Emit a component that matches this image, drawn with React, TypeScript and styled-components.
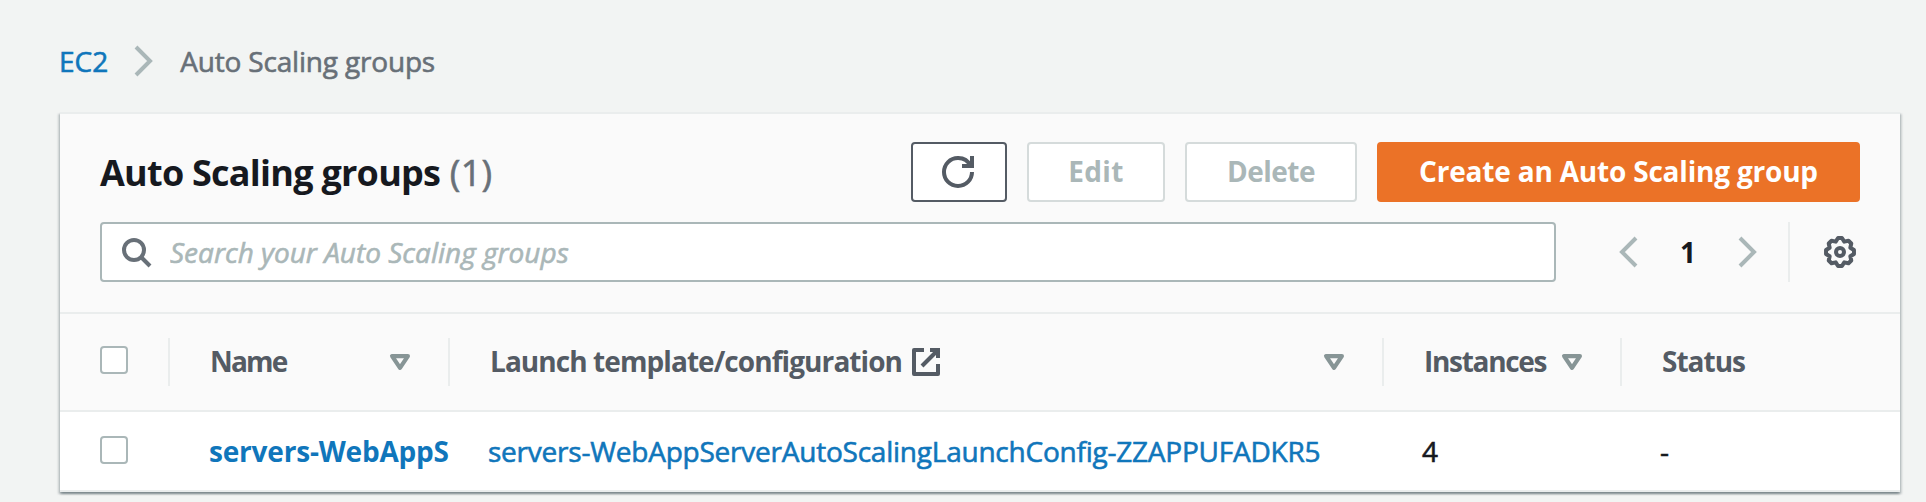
import React from 'react';
import styled, { createGlobalStyle } from 'styled-components';

const GlobalStyle = createGlobalStyle`
  *, *::before, *::after { box-sizing: border-box; }
  body {
    margin: 0;
    background: #f2f4f3;
    color: #16191f;
    font: 400 28px/38px "Open Sans", "Noto Sans", sans-serif;
  }
`;

const Page = styled.main`
  height: 502px;
  padding: 42px 26px 0 60px;
  overflow: hidden;
`;

const Breadcrumbs = styled.nav`
  display: flex;
  align-items: center;
  gap: 20px;
  height: 38px;
  margin: 0 0 32px -1px;
  -webkit-text-stroke: 0.6px currentColor;
`;

const Crumb = styled.span<{ $link?: boolean }>`
  color: ${(p) => (p.$link ? '#1076bb' : '#687078')};
  letter-spacing: ${(p) => (p.$link ? '0' : '-0.18px')};
`;

const Icon = styled.svg<{ $color: string; $round?: boolean; $weight?: number }>`
  display: block;
  flex: none;
  width: 32px;
  height: 32px;
  overflow: visible;
  fill: none;
  stroke: ${(p) => p.$color};
  stroke-width: ${(p) => p.$weight ?? 2};
  stroke-linejoin: ${(p) => (p.$round ? 'round' : 'miter')};
`;

const Panel = styled.section`
  width: 1840px;
  border-top: 2px solid #eaeded;
  background: #fff;
  box-shadow:
    0 2px 2px 0 rgba(0, 28, 36, 0.3),
    2px 2px 2px 0 rgba(0, 28, 36, 0.15),
    -2px 2px 2px 0 rgba(0, 28, 36, 0.15);
`;

const PanelHeader = styled.header`
  height: 200px;
  padding: 28px 40px 0;
  background: #fafafa;
  border-bottom: 2px solid #eaeded;
`;

const TitleRow = styled.div`
  display: flex;
  align-items: center;
  justify-content: space-between;
  height: 60px;
  margin-bottom: 20px;
`;

const Title = styled.h2`
  margin: 0;
  padding-top: 2px;
  font-size: 36px;
  font-weight: 700;
  letter-spacing: -0.75px;
`;

const Counter = styled.span`
  margin-left: 1px;
  color: #687078;
  font-weight: 400;
  letter-spacing: 0.2px;
  -webkit-text-stroke: 0.6px currentColor;
`;

const Actions = styled.div`
  display: flex;
  gap: 20px;
`;

const tones = {
  normal: { border: '#545b64', bg: '#fff', text: '#545b64' },
  disabled: { border: '#d5dbdb', bg: '#fff', text: '#aab7b8' },
  primary: { border: '#eb7227', bg: '#eb7227', text: '#fff' },
};

const Button = styled.button<{ $tone: keyof typeof tones; $width: number; $track?: number }>`
  display: flex;
  align-items: center;
  justify-content: center;
  width: ${(p) => p.$width}px;
  height: 60px;
  padding: 0 0 2px;
  border: 2px solid ${(p) => tones[p.$tone].border};
  border-radius: 4px;
  background: ${(p) => tones[p.$tone].bg};
  color: ${(p) => tones[p.$tone].text};
  font: inherit;
  font-weight: 700;
  letter-spacing: ${(p) => p.$track ?? 0}px;
  white-space: nowrap;
`;

const IconButton = styled(Button)`
  padding: 0 2px 0 0;
`;

const ToolRow = styled.div`
  display: flex;
  align-items: center;
  height: 60px;
`;

const SearchBox = styled.label`
  display: flex;
  align-items: center;
  gap: 18px;
  width: 1456px;
  height: 60px;
  padding: 0 18px;
  border: 2px solid #aab7b8;
  border-radius: 4px;
  background: #fff;
`;

const SearchInput = styled.input`
  flex: 1;
  min-width: 0;
  padding: 0;
  border: 0;
  outline: 0;
  background: transparent;
  font: inherit;
  &::placeholder {
    color: #aab7b8;
    font-style: italic;
    opacity: 1;
    -webkit-text-stroke: 0.6px #aab7b8;
  }
`;

const Pager = styled.div`
  display: flex;
  align-items: center;
  margin-left: 58px;
`;

const PageNumber = styled.span`
  width: 86px;
  padding: 0 2px 1px 0;
  text-align: center;
  font-weight: 700;
`;

const Settings = styled.div`
  display: flex;
  align-items: center;
  height: 60px;
  margin-left: 24px;
  padding-left: 34px;
  border-left: 2px solid #eaeded;
`;

const Row = styled.div`
  display: grid;
  grid-template-columns: 110px 280px 934px 238px 1fr;
  align-items: center;
  border-bottom: 2px solid #eaeded;
`;

const HeadRow = styled(Row)`
  height: 98px;
  background: #fafafa;
  color: #545b64;
  font-weight: 700;
`;

const BodyRow = styled(Row)`
  height: 80px;
`;

const HeadCell = styled.div`
  display: flex;
  align-items: center;
  height: 48px;
  padding: 0 38px 0 40px;
  border-right: 2px solid #eaeded;
  white-space: nowrap;
  &:last-child { border-right: 0; }
`;

const HeadLabel = styled.span<{ $track: number }>`
  padding-bottom: 2px;
  letter-spacing: ${(p) => p.$track}px;
`;

const ExternalSlot = styled.span`
  margin-left: 8px;
`;

const SortSlot = styled.span`
  margin: 0 -6px 0 auto;
`;

const CheckCell = styled(HeadCell)<{ $plain?: boolean }>`
  padding: 0 0 ${(p) => (p.$plain ? 2 : 4)}px 40px;
  border-right-color: ${(p) => (p.$plain ? 'transparent' : '#eaeded')};
`;

const Checkbox = styled.span`
  width: 28px;
  height: 28px;
  border: 2px solid #aab7b8;
  border-radius: 4px;
  background: #fff;
`;

const Cell = styled.div<{ $track?: number; $inset?: number }>`
  padding-left: ${(p) => p.$inset ?? 38}px;
  letter-spacing: ${(p) => p.$track ?? 0}px;
`;

const CellText = styled.div<{ $link?: boolean; $bold?: boolean }>`
  white-space: nowrap;
  color: ${(p) => (p.$link ? '#1076bb' : 'inherit')};
  font-weight: ${(p) => (p.$bold ? 700 : 400)};
  -webkit-text-stroke: ${(p) => (p.$bold ? 0 : 0.6)}px currentColor;
`;

const gearOutline = (() => {
  const at = (deg: number, r: number) => {
    const a = (deg * Math.PI) / 180;
    return `${(8 + r * Math.sin(a)).toFixed(2)} ${(8 - r * Math.cos(a)).toFixed(2)}`;
  };
  const points: string[] = [];
  for (let tooth = 0; tooth < 360; tooth += 45) {
    points.push(at(tooth - 8, 7.05), at(tooth + 8, 7.05), at(tooth + 22.5, 5.6));
  }
  return `M${points.join('L')}Z`;
})();

const ChevronRight = () => (
  <Icon viewBox="0 0 16 16" $color="#aab7b8"><path d="M4 1l7 7-7 7" /></Icon>
);

const ChevronLeft = () => (
  <Icon viewBox="0 0 16 16" $color="#aab7b8"><path d="M11 1L4 8l7 7" /></Icon>
);

const SortIcon = () => (
  <SortSlot>
    <Icon viewBox="0 0 16 16" $color="#879596" $round $weight={2.1}>
      <path d="M4.05 5.05h7.9L8 10.95z" />
    </Icon>
  </SortSlot>
);

export default function App() {
  return (
    <Page>
      <GlobalStyle />
      <Breadcrumbs>
        <Crumb $link>EC2</Crumb>
        <ChevronRight />
        <Crumb>Auto Scaling groups</Crumb>
      </Breadcrumbs>
      <Panel>
        <PanelHeader>
          <TitleRow>
            <Title>Auto Scaling groups <Counter>(1)</Counter></Title>
            <Actions>
              <IconButton $tone="normal" $width={96} aria-label="Refresh">
                <Icon viewBox="0 0 16 16" $color="#545b64">
                  <path d="M10 5h5V0" />
                  <path d="M15 8a6.957 6.957 0 0 1-7 7 6.957 6.957 0 0 1-7-7 6.957 6.957 0 0 1 7-7 6.87 6.87 0 0 1 6.3 4" />
                </Icon>
              </IconButton>
              <Button $tone="disabled" $width={138} $track={0.35}>Edit</Button>
              <Button $tone="disabled" $width={172} $track={-0.5}>Delete</Button>
              <Button $tone="primary" $width={483} $track={-0.2}>Create an Auto Scaling group</Button>
            </Actions>
          </TitleRow>
          <ToolRow>
            <SearchBox>
              <Icon viewBox="0 0 16 16" $color="#687078">
                <circle cx="7" cy="7" r="5" />
                <path d="M15 15l-4.5-4.5" />
              </Icon>
              <SearchInput placeholder="Search your Auto Scaling groups" />
            </SearchBox>
            <Pager>
              <ChevronLeft />
              <PageNumber>1</PageNumber>
              <ChevronRight />
            </Pager>
            <Settings>
              <Icon viewBox="0 0 16 16" $color="#545b64" $round>
                <circle cx="8" cy="8" r="2" />
                <path d={gearOutline} />
              </Icon>
            </Settings>
          </ToolRow>
        </PanelHeader>
        <HeadRow>
          <CheckCell><Checkbox /></CheckCell>
          <HeadCell><HeadLabel $track={-1.8}>Name</HeadLabel><SortIcon /></HeadCell>
          <HeadCell>
            <HeadLabel $track={-0.93}>Launch template/configuration</HeadLabel>
            <ExternalSlot>
              <Icon viewBox="0 0 16 16" $color="#545b64">
                <path d="M10 2h4v4" />
                <path d="M6 10l8-8" />
                <path strokeLinejoin="round" d="M14 9.048V14H2V2h5" />
              </Icon>
            </ExternalSlot>
            <SortIcon />
          </HeadCell>
          <HeadCell><HeadLabel $track={-1.3}>Instances</HeadLabel><SortIcon /></HeadCell>
          <HeadCell><HeadLabel $track={-1}>Status</HeadLabel></HeadCell>
        </HeadRow>
        <BodyRow>
          <CheckCell $plain><Checkbox /></CheckCell>
          <Cell $track={-0.2} $inset={39}><CellText $link $bold>servers-WebAppS</CellText></Cell>
          <Cell $track={-0.23}><CellText $link>servers-WebAppServerAutoScalingLaunchConfig-ZZAPPUFADKR5</CellText></Cell>
          <Cell><CellText>4</CellText></Cell>
          <Cell><CellText>-</CellText></Cell>
        </BodyRow>
      </Panel>
    </Page>
  );
}
